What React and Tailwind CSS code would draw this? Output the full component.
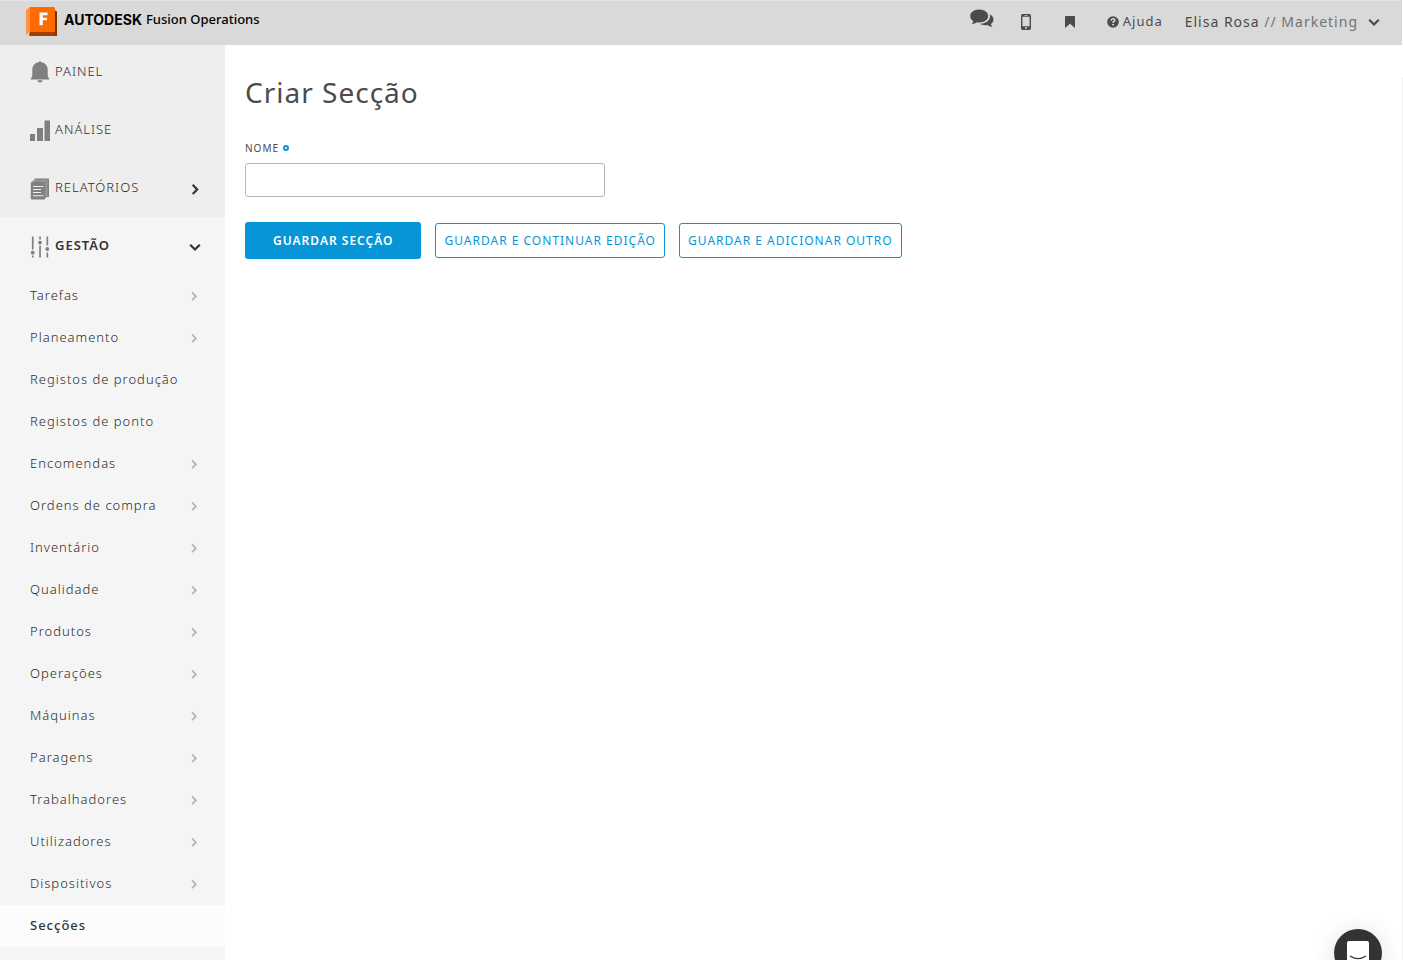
import React from "react";

const subItems = [
  { label: "Tarefas", arrow: true },
  { label: "Planeamento", arrow: true },
  { label: "Registos de produção" },
  { label: "Registos de ponto" },
  { label: "Encomendas", arrow: true },
  { label: "Ordens de compra", arrow: true },
  { label: "Inventário", arrow: true },
  { label: "Qualidade", arrow: true },
  { label: "Produtos", arrow: true },
  { label: "Operações", arrow: true },
  { label: "Máquinas", arrow: true },
  { label: "Paragens", arrow: true },
  { label: "Trabalhadores", arrow: true },
  { label: "Utilizadores", arrow: true },
  { label: "Dispositivos", arrow: true },
  { label: "Secções", active: true },
];

function Chevron({ className, down = false }) {
  return (
    <svg className={className} viewBox="0 0 12 12" fill="none" stroke="currentColor" strokeWidth="2.2" aria-hidden="true">
      <path d={down ? "M1.2 3.7 6 8.5l4.8-4.8" : "M3.7 1.7 8.2 6.500l-4.500 4.500"} />
    </svg>
  );
}

function Logo() {
  return (
    <svg className="h-[30px] w-8 shrink-0" viewBox="0 0 32 30" aria-hidden="true">
      <path d="M0 3 4 0v25l-4 3z" fill="#ff9248" />
      <path d="M4 25h27V29H4.500Q3 29 3 27.500z" fill="#a33f00" />
      <path d="M29 3.500 31 4.500V29l-2-3z" fill="#7d3000" />
      <path d="M4 0h23.500Q29 0 29 1.500V25H4z" fill="#ff6b00" />
      <path d="M13.500 5.500h8v2.700h-4.700v2.500h4.200v2.600h-4.200v5h-3.300z" fill="#fff" />
    </svg>
  );
}

function BellIcon() {
  return (
    <svg className="h-[22px] w-5" viewBox="0 0 20 22" fill="currentColor" aria-hidden="true">
      <path d="M8.800 1.300Q9 .3 10 .3t1.200 1C15.200 1.900 17.700 4.800 17.700 9v4.500c0 1.500.3 2.400 1.500 4.100v1H.8v-1C2 15.900 2.300 15 2.300 13.500V9c0-4.200 2.500-7.100 6.500-7.700z" />
      <path d="M7.300 19.300h5.400c-.2 1.300-1.200 2.100-2.700 2.100s-2.500-.8-2.700-2.100z" />
    </svg>
  );
}

function BarsIcon() {
  return (
    <svg className="h-[22px] w-5" viewBox="0 0 20 22" fill="currentColor" aria-hidden="true">
      <path d="M0 14h5v7H0zM7 8h6v13H7zM14.500 0.500H20V21h-5.500z" />
    </svg>
  );
}

function ReportsIcon() {
  return (
    <svg className="h-[22px] w-5" viewBox="0 0 20 22" aria-hidden="true">
      <path d="M4.500.5H19v18.500h-3V3H4.500z" fill="currentColor" />
      <path d="M3 2.300h13.800V20H15V4H2z" fill="currentColor" stroke="#eee" strokeWidth=".3" />
      <path d="M.8 5q0-1 1-1H15v17.500H1.800q-1 0-1-1z" fill="currentColor" />
      <path d="M3 8.500h10.500M3 11.500h8M3 14.500h8M3 17.800h10.500" stroke="#eee" strokeWidth="1.100" />
    </svg>
  );
}

function SlidersIcon() {
  return (
    <svg className="h-[22px] w-5" viewBox="0 0 20 22" fill="currentColor" aria-hidden="true">
      <path d="M1.900.5h1.700v13H1.900zM1.900 19.500h1.700v2H1.900zM9.200.5h1.700v3H9.200zM9.200 9.500h1.700v12H9.200zM16.500.5h1.700v9h-1.700zM16.500 16.500h1.700v5h-1.700z" />
      <circle cx="2.700" cy="16.700" r="1.900" />
      <circle cx="10" cy="6.600" r="1.900" />
      <circle cx="17.300" cy="13" r="1.900" />
    </svg>
  );
}

function CommentsIcon() {
  return (
    <svg className="h-[19px] w-6" viewBox="0 0 24 19" fill="currentColor" aria-hidden="true">
      <path d="M9.200.5c5 0 9 2.900 9 6.500s-4 6.500-9 6.500c-.9 0-1.700-.1-2.500-.2-1.200.9-2.700 1.600-4.700 1.800-.3-.5 1-1.300 1.400-2.900C1.500 11 .2 9.100.2 7 .2 3.400 4.200.5 9.200.5z" />
      <path d="M19.700 5.300c2.300 1.200 3.800 3 3.800 5.100 0 1.900-1 3.400-2.700 4.600.4 1.500 1.700 2.200 1.400 2.800-1.900-.1-3.400-.8-4.500-1.800-3 .6-6 .1-8.100-1.200 5.700 0 10.500-3.200 10.500-7.800 0-.6-.1-1.200-.4-1.700z" />
    </svg>
  );
}

function PhoneIcon() {
  return (
    <svg className="h-4 w-[10px]" viewBox="0 0 10 16" aria-hidden="true">
      <path fill="currentColor" fillRule="evenodd" d="M1.700 0h6.600Q10 0 10 1.700v12.600Q10 16 8.300 16H1.700Q0 16 0 14.300V1.700Q0 0 1.700 0zM1.400 2.800v9.400h7.200V2.800zM3.500 1.100v.7h3v-.7zM5 13.100a1 1 0 1 0 0 2 1 1 0 0 0 0-2z" />
    </svg>
  );
}

function HelpIcon() {
  return (
    <svg className="size-3" viewBox="0 0 12 12" aria-hidden="true">
      <circle cx="6" cy="6" r="5.800" fill="currentColor" />
      <path d="M4 4.600Q4.200 2.700 6 2.700t1.900 1.600Q7.900 5.300 6.100 6v1" fill="none" stroke="#d9d9d9" strokeWidth="1.500" />
      <path d="M5.200 8h1.700v1.600H5.200z" fill="#d9d9d9" />
    </svg>
  );
}

function MainItem({ icon, label, arrow, first }) {
  return (
    <a href="#" className={`flex items-center pr-6 pl-[30px] ${first ? "h-14 pb-0.5" : "h-[58px] pt-0.5"}`}>
      <span className="text-[#808080]">{icon}</span>
      <span className={`ml-[5px] grow ${first ? "" : "pb-0.5"}`}>{label}</span>
      {arrow && <Chevron className="size-3 text-[#333]" />}
    </a>
  );
}

export default function App() {
  return (
    <div className="flex min-h-screen flex-col bg-white font-['Noto_Sans',sans-serif] text-[13px] tracking-[1px] text-[#4b4b4b]">
      <header className="mr-px flex h-[45px] items-center justify-between border-t border-[#e3e3e3] bg-[#d9d9d9] pr-[22px] pb-[3px] pl-[26px]">
        <a href="#" className="flex items-center gap-1.5 text-black">
          <Logo />
          <span className="flex items-center gap-1 pb-1 tracking-normal">
            <span className="font-['Inter',sans-serif] text-sm font-bold">AUTODESK</span>
            <span className="text-[13px] font-medium">Fusion Operations</span>
          </span>
        </a>
        <div className="flex items-center text-[#4b4b4b]">
          <button type="button" aria-label="Mensagens" className="mr-[27px] pb-1.5"><CommentsIcon /></button>
          <button type="button" aria-label="Telemóvel" className="mr-[34px]"><PhoneIcon /></button>
          <button type="button" aria-label="Favoritos" className="mr-8">
            <svg className="h-3 w-[10px]" viewBox="0 0 10 12" fill="currentColor" aria-hidden="true">
              <path d="M1 0h8q1 0 1 1v11L5 7.800 0 12V1q0-1 1-1z" />
            </svg>
          </button>
          <a href="#" className="mr-[22px] flex items-center gap-1"><HelpIcon /><span>Ajuda</span></a>
          <button type="button" className="flex items-center text-sm tracking-[1px]">
            <span>Elisa Rosa <span className="text-[#737373]">// Marketing</span></span>
            <Chevron down className="ml-2.5 size-3" />
          </button>
        </div>
      </header>

      <div className="flex grow">
        <nav className="w-[225px] shrink-0 bg-[#f5f5f5] font-light text-[#2b2b2b]">
          <div className="bg-[#eee]">
            <MainItem first icon={<BellIcon />} label="PAINEL" />
            <MainItem icon={<BarsIcon />} label="ANÁLISE" />
            <MainItem icon={<ReportsIcon />} label="RELATÓRIOS" arrow />
          </div>
          <a href="#" className="flex h-[58px] items-center pt-0.5 pr-6 pl-[30px] font-semibold text-[#333]">
            <span className="text-[#808080]"><SlidersIcon /></span>
            <span className="ml-[5px] grow pb-0.5">GESTÃO</span>
            <Chevron down className="size-3" />
          </a>
          <ul>
            {subItems.map((item) => (
              <li key={item.label}>
                <a
                  href="#"
                  className={`flex h-[42px] items-center justify-between pr-[26px] pl-[30px] ${
                    item.active ? "bg-[#fcfcfc] font-medium text-[#333]" : ""
                  }`}
                >
                  <span>{item.label}</span>
                  {item.arrow && <Chevron className="size-[10px] text-[#b5b5b5]" />}
                </a>
              </li>
            ))}
          </ul>
        </nav>

        <main className="mt-8 grow border-r border-[#f2f2f2] px-5">
          <h1 className="text-[28px] leading-[30px]">Criar Secção</h1>
          <form className="mt-8" onSubmit={(e) => e.preventDefault()}>
            <label htmlFor="nome" className="flex items-center gap-1 text-[10px] leading-[18px] tracking-[1px]">
              NOME
              <span className="size-1.5 rounded-full border-2 border-[#0696d7]" />
            </label>
            <input
              id="nome"
              type="text"
              className="mt-1.5 block h-[34px] w-[360px] max-w-full rounded-[3px] border border-[#b5b5bd] bg-white px-2 outline-none"
            />
            <div className="mt-[25px] flex flex-wrap items-center gap-3.5 text-xs">
              <button type="submit" className="h-[37px] rounded-[3px] bg-[#0696d7] px-7 font-semibold tracking-[1px] text-white">
                GUARDAR SECÇÃO
              </button>
              <button type="button" className="h-[35px] rounded-[3px] border border-[#0696d7] px-2 tracking-[1px] text-[#0696d7]">
                GUARDAR E CONTINUAR EDIÇÃO
              </button>
              <button type="button" className="h-[35px] rounded-[3px] border border-[#0696d7] px-2 tracking-[1px] text-[#0696d7]">
                GUARDAR E ADICIONAR OUTRO
              </button>
            </div>
          </form>
        </main>
      </div>

      <button
        type="button"
        aria-label="Abrir chat"
        className="fixed right-[21px] -bottom-[17px] flex size-12 items-center justify-center rounded-full bg-[#333] shadow-[0_2px_24px_rgba(0,0,0,0.12)]"
      >
        <svg className="h-6 w-[22px]" viewBox="0 0 22 24" aria-hidden="true">
          <path d="M2 0h18q2 0 2 2v22l-6-3H2q-2 0-2-2V2q0-2 2-2z" fill="#fff" />
          <path d="M3.500 15.200q7.500 4.800 15 0" fill="none" stroke="#333" strokeWidth="1.300" strokeLinecap="round" />
        </svg>
      </button>
    </div>
  );
}
